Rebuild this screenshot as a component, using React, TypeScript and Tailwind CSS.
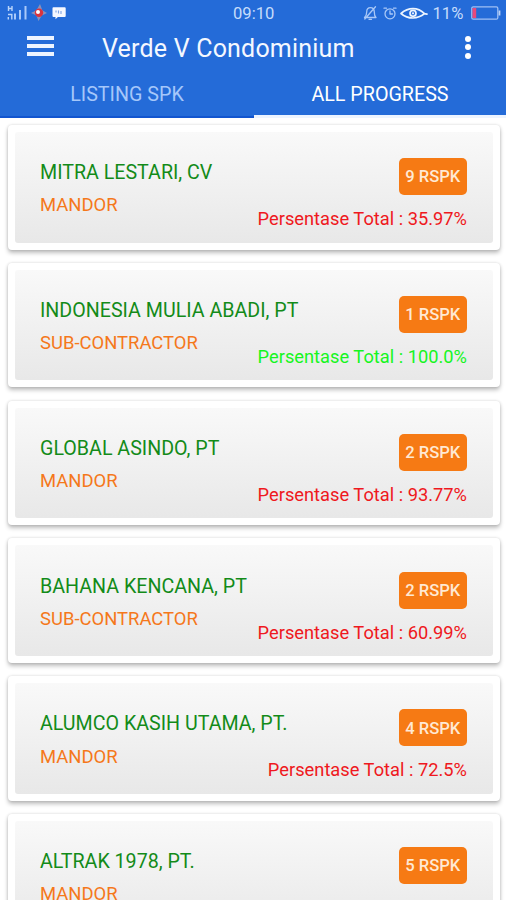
const items = [
  { name: 'MITRA LESTARI, CV', role: 'MANDOR', count: 9, total: '35.97%', done: false },
  { name: 'INDONESIA MULIA ABADI, PT', role: 'SUB-CONTRACTOR', count: 1, total: '100.0%', done: true },
  { name: 'GLOBAL ASINDO, PT', role: 'MANDOR', count: 2, total: '93.77%', done: false },
  { name: 'BAHANA KENCANA, PT', role: 'SUB-CONTRACTOR', count: 2, total: '60.99%', done: false },
  { name: 'ALUMCO KASIH UTAMA, PT.', role: 'MANDOR', count: 4, total: '72.5%', done: false },
  { name: 'ALTRAK 1978, PT.', role: 'MANDOR', count: 5, total: '', done: false },
];

function StatusLeft() {
  return (
    <svg className="block h-[26px] w-[76px]" viewBox="0 0 76 26" fill="none">
      <g stroke="#b9d4fa" strokeWidth="1.4">
        <path d="M8.5 6v5M12 6v5M8.5 8.5H12" />
        <path d="M8 14.500h3.800v5M8.300 17v2.500" />
      </g>
      <path d="M15 13.500v6M20 10v9.500M25.500 6v13.500" stroke="#a9c9fa" strokeWidth="2" />
      <path d="M40 4l2.300 6.200L47 13l-5.200 2.500L38.500 21l-2.100-5.500L31 13l5.400-2.800z" fill="#8b90ba" />
      <circle cx="39" cy="12.800" r="4.200" fill="#d9333f" />
      <circle cx="38" cy="12" r="2" fill="#fff" />
      <path d="M53.500 7.300h11.200a1 1 0 011 1v7.700a1 1 0 01-1 1h-6.800l-2.400 2.300V17h-2a1 1 0 01-1-1V8.300a1 1 0 011-1z" fill="#f5f8ff" />
      <path d="M56 10.500v2M58.500 10.500v3M61 11v3" stroke="#7da3e4" strokeWidth="1.100" />
    </svg>
  );
}

function StatusIcons() {
  return (
    <svg className="block h-[26px] w-[68px]" viewBox="362 0 68 26" fill="none" strokeLinecap="round" strokeLinejoin="round">
      <g stroke="#a9c8f7" strokeWidth="1.300">
        <path d="M364.500 17.500h11.500c-1.600-1.400-1.700-2.500-1.700-5.500 0-2.800-1.500-4.400-3.800-4.400s-3.800 1.600-3.800 4.400c0 3-.5 4.100-2.200 5.500zM369 19.300h2.500M375.500 6.700L364.800 19" />
        <circle cx="390" cy="13.800" r="5" />
        <path d="M390 11v3h2.500M384 8.200h2.500M393.500 8.200h2.500" />
      </g>
      <g stroke="#edf5ff" strokeWidth="1.700">
        <path d="M401 13.500c3.500-3 7.500-4.800 12-4.800s8.500 2 11.500 5c-3 2.500-7 4.300-11.500 4.300s-8.500-1.500-12-4.500zM424 13.700l3 .5" />
        <circle cx="413" cy="13.300" r="3" />
      </g>
      <circle cx="413" cy="13.300" r="1.100" fill="#edf5ff" />
    </svg>
  );
}

function Header() {
  return (
    <header className="h-[118px] shrink-0 bg-[#246bd8] text-white">
      <div className="flex h-[26px] items-center">
        <StatusLeft />
        <span className="ml-[157px] w-[43px] whitespace-nowrap pt-[2px] text-[16.600px] leading-[26px] text-[#c6dcfb]">09:10</span>
        <div className="ml-[86px]"><StatusIcons /></div>
        <span className="ml-[2.500px] w-[32.500px] whitespace-nowrap pt-[2px] text-[16.600px] leading-[26px] text-[#c6dcfb]">11%</span>
        <svg className="ml-[5px] block h-[26px] w-[32px]" viewBox="469 0 32 26" fill="none">
          <rect x="470.800" y="6.800" width="26" height="12.400" rx="1.500" stroke="#9fc0f4" strokeWidth="1.300" />
          <path d="M471.500 8h3.700v10h-3.700z" fill="#e8487d" />
          <path d="M498.500 10.500v5" stroke="#b9d2f8" strokeWidth="1.800" />
        </svg>
      </div>
      <div className="flex h-[42px] items-center">
        <button aria-label="Menu" className="ml-[26.500px] flex w-[27px] flex-col gap-1 pb-[2px]">
          <span className="h-1 w-full bg-[#edf4ff]" />
          <span className="h-1 w-full bg-[#edf4ff]" />
          <span className="h-1 w-full bg-[#edf4ff]" />
        </button>
        <h1 className="ml-[48.500px] w-[255px] whitespace-nowrap pt-[3px] text-[25px] leading-[42px] tracking-[0.200px] text-[#f4f8ff]">Verde V Condominium</h1>
        <button aria-label="More" className="ml-[108px] flex flex-col gap-[2.500px]">
          <span className="size-[6px] rounded-full bg-white" />
          <span className="size-[6px] rounded-full bg-white" />
          <span className="size-[6px] rounded-full bg-white" />
        </button>
      </div>
      <nav className="flex h-[50px] text-[19.700px] leading-[54px]">
        <div className="h-[50px] w-[254px] border-b-2 border-[#1255cf] text-center text-[#a5c7fa]">LISTING SPK</div>
        <div className="h-[50px] w-[252px] border-b-[3px] border-[#edf4ff] text-center text-white">ALL PROGRESS</div>
      </nav>
    </header>
  );
}

export default function App() {
  return (
    <div className="flex h-[900px] w-[506px] flex-col overflow-hidden bg-white font-['Roboto',sans-serif]">
      <Header />
      <main className="flex flex-col gap-[13.300px] pl-[7.500px] pr-[6px] pt-[7px]">
        {items.map((item) => (
          <article key={item.name} className="h-[124.500px] shrink-0 rounded-[4px] bg-white p-[7px] shadow-[0_3px_4px_rgba(0,0,0,0.25),0_0_3px_rgba(0,0,0,0.15)]">
            <div className="flex h-full justify-between rounded-[3px] bg-linear-to-b from-[#f9f9f9] to-[#e8e8e8] pl-[25.500px] pr-[26px]">
              <div className="whitespace-nowrap pt-[27.200px]">
                <h2 className="h-[32.300px] text-[19.650px] leading-[28px] text-[#138b19]">{item.name}</h2>
                <p className="text-[18.450px] leading-[28px] text-[#f5781b]">{item.role}</p>
              </div>
              <div className="-ml-[100px] flex flex-col items-end whitespace-nowrap pt-[26.300px]">
                <span className="flex h-[37px] w-[68.500px] items-center justify-center rounded-[5px] bg-[#f67a14] pt-[2px] text-[16.600px] font-medium text-[#ffe9d3]">{item.count} RSPK</span>
                {item.total && (
                  <p className={item.done ? 'mt-[10px] text-[18.300px] leading-[28px] text-[#16f51f]' : 'mt-[10px] text-[18.300px] leading-[28px] text-[#ef1820]'}>
                    Persentase Total : {item.total}
                  </p>
                )}
              </div>
            </div>
          </article>
        ))}
      </main>
    </div>
  );
}
